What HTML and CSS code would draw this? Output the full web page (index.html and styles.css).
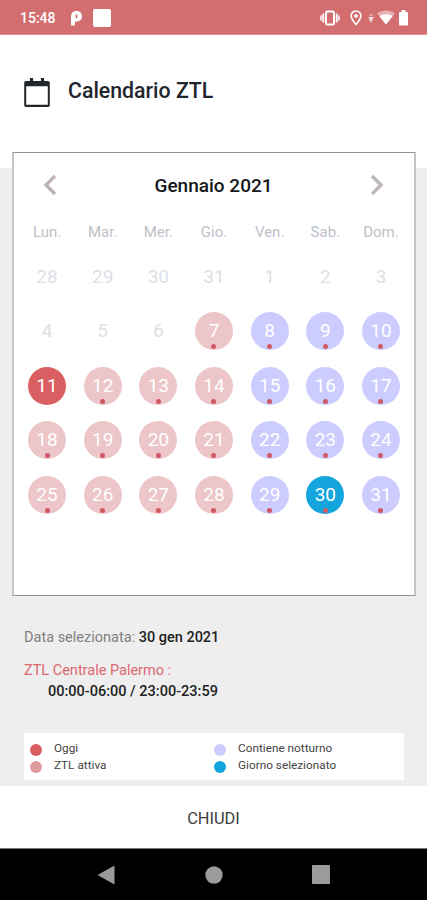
FILE: index.html
```html
<!DOCTYPE html>
<html lang="it">
<head>
    <meta charset="UTF-8">
    <meta name="viewport" content="width=device-width, initial-scale=1.0">
    <title>Calendario ZTL</title>
    <link rel="stylesheet" href="styles.css">
</head>
<body>
    <div class="status-bar">
        <span class="time">15:48</span>
        <svg class="parking" width="13" height="16" viewBox="0 0 13 16">
            <path d="M1 15.500V7C1 3.200 3 1 6.500 1S12 3.200 12 6.300s-2 5.200-5 5.200H5v2.500c0 1-.6 1.500-1.500 1.500zM5.600 4.600v3.600h1.800V4.600z" fill="#fff" fill-rule="evenodd"/>
        </svg>
        <span class="app-square"></span>
        <div class="status-icons">
            <svg width="20" height="16" viewBox="0 0 20 16">
                <rect x="6" y="1.500" width="8" height="13" rx="1.500" fill="none" stroke="#fff" stroke-width="2"/>
                <path d="M3.300 3.500v9M16.700 3.500v9" stroke="#fff" stroke-width="1.800"/>
                <path d="M1 5.500v5M19 5.500v5" stroke="#fff" stroke-width="1.500"/>
            </svg>
            <svg class="pin" width="12" height="16" viewBox="0 0 12 16">
                <path d="M6 1C3.200 1 1.200 3 1.200 5.800 1.200 9.200 6 14.500 6 14.500s4.800-5.300 4.800-8.700C10.800 3 8.800 1 6 1z" fill="none" stroke="#fff" stroke-width="1.600"/>
                <circle cx="6" cy="5.800" r="1.900" fill="#fff"/>
            </svg>
            <svg class="data" width="6" height="12" viewBox="0 0 6 12">
                <path d="M3 1l2 3H1z" fill="#fff" opacity=".4"/>
                <path d="M.3 5h5.400L3 11z" fill="#fff" opacity=".75"/>
            </svg>
            <svg class="wifi" width="18" height="15" viewBox="0 0 18 15">
                <path d="M0 3.500C5-.5 13-.5 18 3.500L9 14.500z" fill="#fff" opacity=".45"/>
                <path d="M2.500 6.200c3.500-2.500 9.500-2.500 13 0L9 14.500z" fill="#fff"/>
            </svg>
            <svg class="battery" width="9" height="16" viewBox="0 0 9 16">
                <path d="M2.500 0h4v2H8a1 1 0 0 1 1 1v11.500a1 1 0 0 1-1 1H1a1 1 0 0 1-1-1V3a1 1 0 0 1 1-1h1.500z" fill="#fff"/>
            </svg>
        </div>
    </div>

    <div class="header">
        <svg width="28" height="32" viewBox="0 0 28 32">
            <path d="M3 4h22a1.800 1.800 0 0 1 1.800 1.800v22.400A1.800 1.800 0 0 1 25 30H3a1.800 1.800 0 0 1-1.800-1.800V5.800A1.800 1.800 0 0 1 3 4zM3.200 9.200v18.600h21.600V9.200z" fill="#22252b" fill-rule="evenodd"/>
            <path d="M8.500 1v5M19.500 1v5" stroke="#22252b" stroke-width="3.200"/>
        </svg>
        <h1>Calendario ZTL</h1>
    </div>

    <div class="calendar">
        <div class="month">
            <svg width="14" height="22" viewBox="0 0 14 22"><path d="M12 2L3 11l9 9" fill="none" stroke="#bfb3b6" stroke-width="3.400"/></svg>
            <h2>Gennaio 2021</h2>
            <svg width="14" height="22" viewBox="0 0 14 22"><path d="M2 2l9 9-9 9" fill="none" stroke="#bfb7b5" stroke-width="3.400"/></svg>
        </div>
        <div class="weekdays">
            <span>Lun.</span><span>Mar.</span><span>Mer.</span><span>Gio.</span><span>Ven.</span><span>Sab.</span><span>Dom.</span>
        </div>
        <div class="days">
            <span class="day">28</span>
            <span class="day">29</span>
            <span class="day">30</span>
            <span class="day">31</span>
            <span class="day">1</span>
            <span class="day">2</span>
            <span class="day">3</span>

            <span class="day">4</span>
            <span class="day">5</span>
            <span class="day">6</span>
            <span class="day active dot">7</span>
            <span class="day night dot">8</span>
            <span class="day night dot">9</span>
            <span class="day night dot">10</span>

            <span class="day today">11</span>
            <span class="day active dot">12</span>
            <span class="day active dot">13</span>
            <span class="day active dot">14</span>
            <span class="day night dot">15</span>
            <span class="day night dot">16</span>
            <span class="day night dot">17</span>

            <span class="day active dot">18</span>
            <span class="day active dot">19</span>
            <span class="day active dot">20</span>
            <span class="day active dot">21</span>
            <span class="day night dot">22</span>
            <span class="day night dot">23</span>
            <span class="day night dot">24</span>

            <span class="day active dot">25</span>
            <span class="day active dot">26</span>
            <span class="day active dot">27</span>
            <span class="day active dot">28</span>
            <span class="day night dot">29</span>
            <span class="day selected dot">30</span>
            <span class="day night dot">31</span>
        </div>
    </div>

    <div class="details">
        <p>Data selezionata: <strong>30 gen 2021</strong></p>
        <p class="zone">ZTL Centrale Palermo :</p>
        <p class="hours"><strong>00:00-06:00 / 23:00-23:59</strong></p>
    </div>

    <div class="legend">
        <div class="legend-item"><i class="today"></i>Oggi</div>
        <div class="legend-item"><i class="night"></i>Contiene notturno</div>
        <div class="legend-item"><i class="zone-active"></i>ZTL attiva</div>
        <div class="legend-item"><i class="selected"></i>Giorno selezionato</div>
    </div>

    <button class="close">CHIUDI</button>

    <div class="nav-bar">
        <svg width="18" height="20" viewBox="0 0 18 20"><path d="M17.500.5v19L.5 10z" fill="#9b9b9b"/></svg>
        <svg width="18" height="18" viewBox="0 0 18 18"><circle cx="9" cy="9" r="8.700" fill="#9b9b9b"/></svg>
        <svg width="18" height="19" viewBox="0 0 18 19"><rect width="18" height="19" rx="1" fill="#9b9b9b"/></svg>
    </div>
</body>
</html>
```
FILE: styles.css
```css
:root {
    --today: #d95f62;
    --active: #ecc6c8;
    --night: #cdccff;
    --selected: #14a5dd;
}

* {
    box-sizing: border-box;
    margin: 0;
    padding: 0;
}

body {
    height: 900px;
    display: flex;
    flex-direction: column;
    background: #eee;
    font-family: Roboto, sans-serif;
    overflow: hidden;
}

.status-bar {
    height: 35px;
    flex: none;
    display: flex;
    align-items: center;
    padding: 0 19px 0 20px;
    background: #d36e70;
    border-bottom: 1px solid #dd9293;
    color: #fff;
}

.time {
    width: 50px;
    font-size: 14px;
    font-weight: 500;
    padding-top: 2px;
}

.parking {
    margin-top: 2px;
}

.app-square {
    width: 18px;
    height: 18px;
    margin: 1px 0 0 10px;
    border-radius: 2px;
    background: #fff;
}

.status-icons {
    display: flex;
    align-items: center;
    margin: 1px 0 0 auto;
}

.pin {
    margin-left: 10px;
}

.data {
    margin: 0 3px 0 6px;
}

.battery {
    margin-left: 4px;
}

.header {
    height: 133px;
    flex: none;
    display: flex;
    align-items: flex-start;
    padding: 42px 23px 0;
    background: #fff;
}

h1 {
    margin-left: 17px;
    font-size: 21.300px;
    line-height: 28px;
    font-weight: 500;
    color: #22252b;
}

.calendar {
    height: 444px;
    flex: none;
    margin: -16px 11px 0 12px;
    padding: 0 5.200px;
    background: #fff;
    border: 1px solid #929292;
    border-left: 2px solid #c4c4c4;
    border-right: 2px solid #c4c4c4;
}

.month {
    height: 64px;
    display: flex;
    align-items: center;
    justify-content: space-between;
    padding: 0 25px 0 24px;
}

h2 {
    font-size: 19px;
    font-weight: 500;
    color: #15171a;
    padding-top: 1px;
}

.weekdays,
.days {
    display: grid;
    grid-template-columns: repeat(7, 1fr);
    justify-items: center;
}

.weekdays {
    height: 29px;
    align-items: center;
    font-size: 15px;
    color: #bdc2ca;
}

.days {
    margin-top: 3.500px;
    grid-auto-rows: 54.500px;
    align-items: center;
}

.day {
    position: relative;
    width: 38px;
    height: 38px;
    border-radius: 50%;
    font-size: 19px;
    line-height: 38px;
    text-align: center;
    color: #dce1e6;
}

.active,
.night,
.today,
.selected {
    color: #fff;
}

.active {
    background: var(--active);
}

.night {
    background: var(--night);
}

.today {
    background: var(--today);
}

.selected {
    background: var(--selected);
}

.dot::after {
    content: "";
    position: absolute;
    left: 16.500px;
    bottom: 1px;
    width: 5px;
    height: 5px;
    border-radius: 50%;
    background: #cf5965;
}

.details {
    height: 137px;
    flex: none;
    padding: 31px 24px 0;
    font-size: 14.500px;
    line-height: 21px;
    color: #808080;
}

.details strong {
    font-weight: 500;
    color: #222;
}

.zone {
    margin-top: 12px;
    color: #dc6870;
}

.hours {
    padding-left: 24px;
}

.legend {
    height: 47px;
    flex: none;
    display: grid;
    grid-template-columns: 184px 1fr;
    grid-auto-rows: 16.500px;
    margin: 0 23px 0 24px;
    padding: 7px 6px;
    background: #fff;
    font-size: 11.800px;
    line-height: 16px;
    color: #444;
}

.legend-item {
    display: flex;
}

.legend-item i {
    width: 12px;
    height: 12px;
    margin: 4px 12px 0 0;
    border-radius: 50%;
}

.zone-active {
    background: #e09b9f;
}

.close {
    height: 62px;
    flex: none;
    margin-top: 6px;
    border: none;
    background: #fff;
    font-family: inherit;
    font-size: 16.400px;
    color: #3c3c3c;
    padding-top: 2px;
}

.nav-bar {
    flex: 1;
    display: flex;
    align-items: center;
    justify-content: space-between;
    padding: 0 97px;
    border-top: 1px solid #777;
    background: #000;
}
```
